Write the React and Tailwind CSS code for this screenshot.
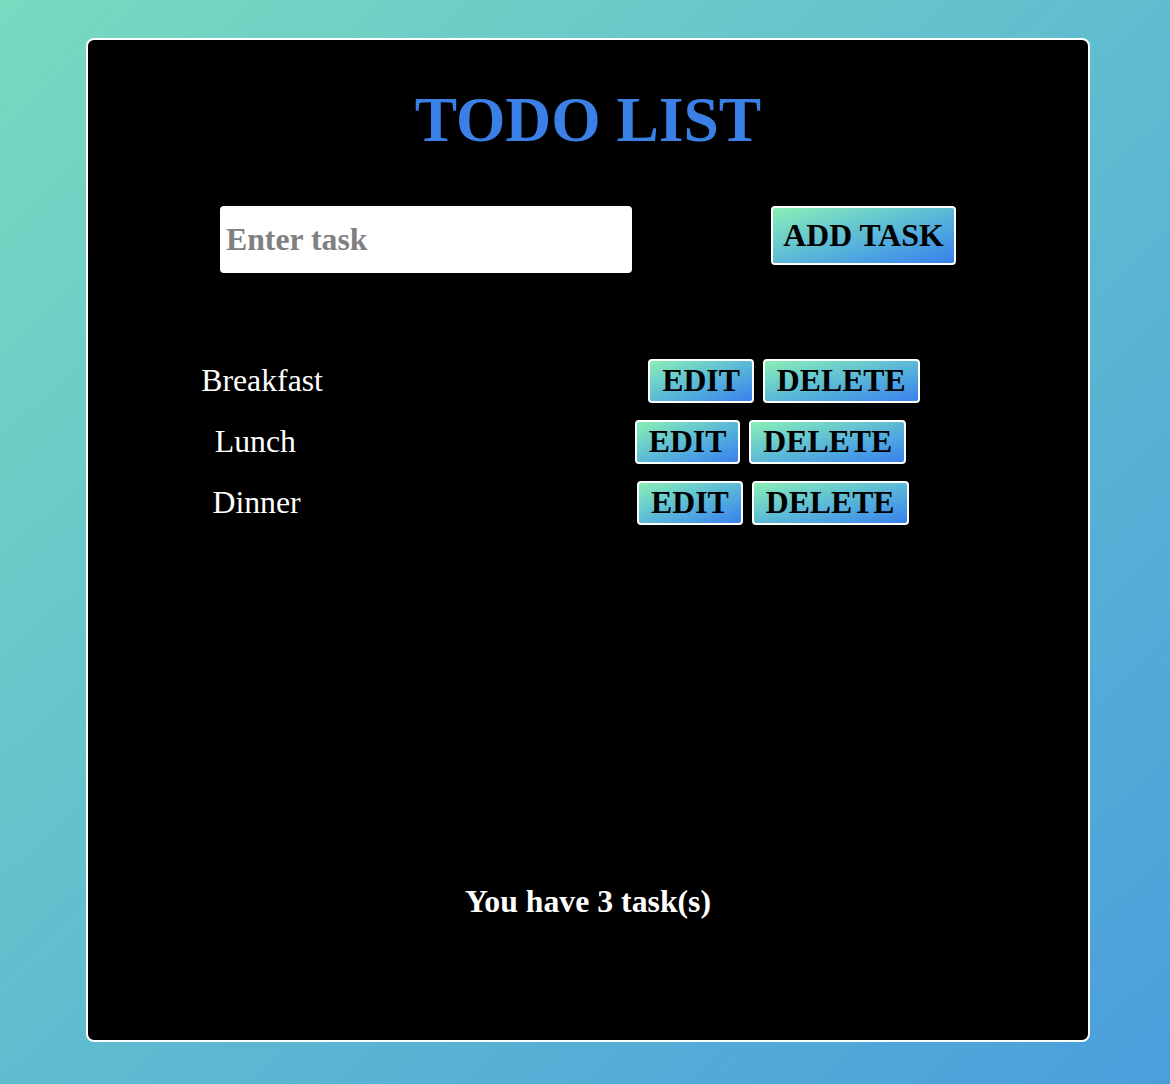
import React from "react";

const serif = { fontFamily: '"Liberation Serif", "Times New Roman", serif' };

function GradButton({ children, className = "" }) {
  return (
    <button
      className={
        "bg-linear-to-br from-[#8aefb4] to-[#3b7fec] border-2 border-white rounded-[4px] text-black font-bold text-[31.75px] leading-[36px] " +
        className
      }
      style={serif}
    >
      {children}
    </button>
  );
}

const tasks = ["Breakfast", "Lunch", "Dinner"];

export default function App() {
  return (
    <div
      className="min-h-[1084px] w-full bg-linear-to-br from-[#78dabf] to-[#4a9edc] pl-[86px] pt-[38px]"
      style={serif}
    >
      <div className="w-[1004px] h-[1004px] bg-black border-2 border-white rounded-lg flex flex-col">
        <h1 className="mt-[44px] text-center text-[63.5px] leading-[72px] font-bold text-[#3a80e6]">
          TODO LIST
        </h1>

        <div className="mt-[50px] flex justify-center items-start gap-[139px]">
          <input
            type="text"
            placeholder="Enter task"
            className="w-[412px] h-[67px] bg-white rounded-[4px] pl-[6px] text-[31.75px] font-bold text-black placeholder:text-[#808080] outline-none"
            style={serif}
          />
          <GradButton className="w-[185px] h-[59px] px-[9px]">ADD TASK</GradButton>
        </div>

        <ul className="mt-[86px] flex flex-col gap-[17px]">
          {tasks.map((t) => (
            <li key={t} className="flex justify-evenly items-center h-[44px]">
              <span className="text-white text-[31.75px] leading-[36px] mr-[212px]">{t}</span>
              <div className="flex gap-[9px] mr-[55px]">
                <GradButton className="px-[12px] py-[2px]">EDIT</GradButton>
                <GradButton className="px-[12px] py-[2px]">DELETE</GradButton>
              </div>
            </li>
          ))}
        </ul>

        <p className="mt-auto mb-[120px] text-center text-white font-bold text-[31.75px] leading-[36px]">
          You have 3 task(s)
        </p>
      </div>
    </div>
  );
}
